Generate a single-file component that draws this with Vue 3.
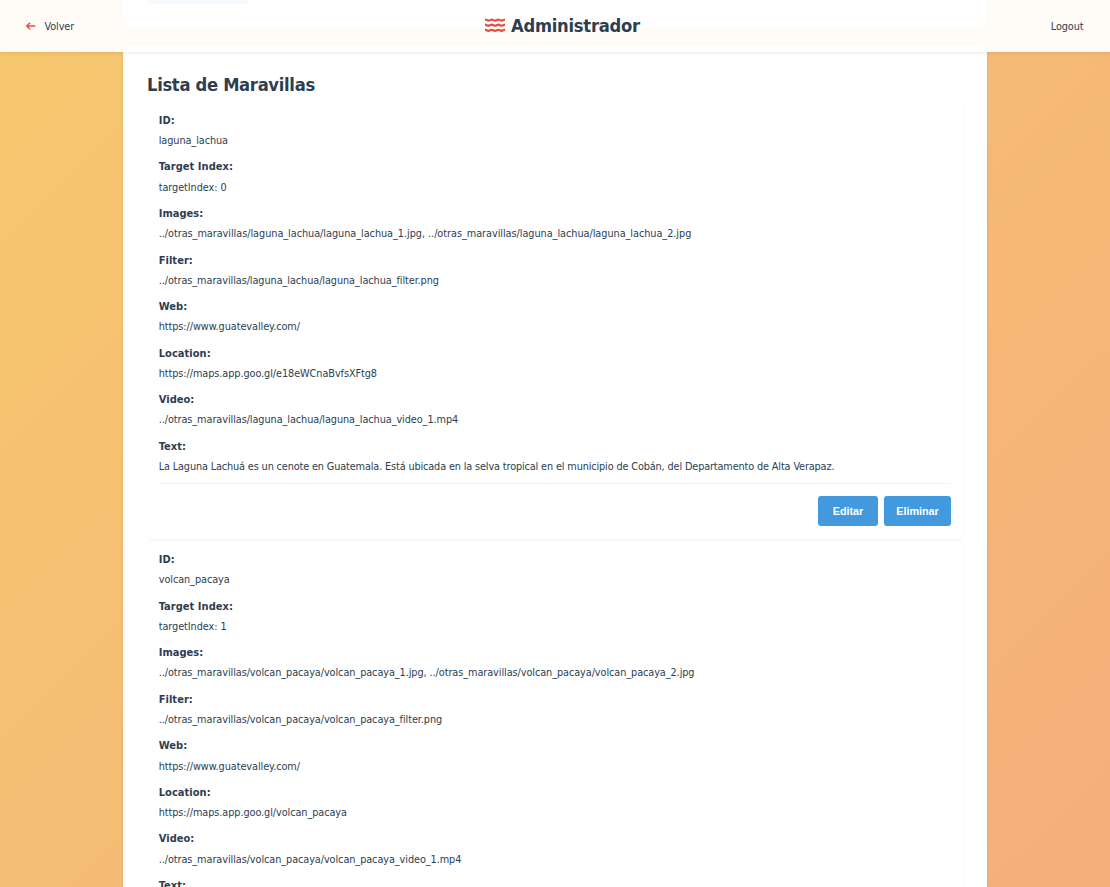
<script setup>
const build = (id, index, location, text) => ({
  id,
  fields: [
    ['ID:', id],
    ['Target Index:', `targetIndex: ${index}`],
    ['Images:', `../otras_maravillas/${id}/${id}_1.jpg, ../otras_maravillas/${id}/${id}_2.jpg`],
    ['Filter:', `../otras_maravillas/${id}/${id}_filter.png`],
    ['Web:', 'https://www.guatevalley.com/'],
    ['Location:', `https://maps.app.goo.gl/${location}`],
    ['Video:', `../otras_maravillas/${id}/${id}_video_1.mp4`],
    ['Text:', text],
  ],
})
const items = [
  build('laguna_lachua', 0, 'e18eWCnaBvfsXFtg8', 'La Laguna Lachuá es un cenote en Guatemala. Está ubicada en la selva tropical en el municipio de Cobán, del Departamento de Alta Verapaz.'),
  build('volcan_pacaya', 1, 'volcan_pacaya', ''),
]
</script>

<template>
  <div class="page">
    <header class="bar">
      <a class="back">
        <svg width="10" height="8" viewBox="0 0 10 8"><path d="M9.3 4H.9M4 .8.8 4 4 7.2" /></svg>
        <span>Volver</span>
      </a>
      <h1 class="brand">
        <svg width="20" height="14" viewBox="0 0 20 14">
          <path v-for="y in [1.6, 6.7, 11.8]" :key="y" :d="`M0 ${y}C1.4 ${y} 2 ${y + 1} 3.4 ${y + 1}S5.3 ${y} 6.7 ${y} 8.6 ${y + 1} 10 ${y + 1} 11.9 ${y} 13.3 ${y} 15.2 ${y + 1} 16.6 ${y + 1} 18.6 ${y} 20 ${y}`" />
        </svg>
        <span>Administrador</span>
      </h1>
      <a class="logout">Logout</a>
    </header>
    <main class="content">
      <section class="panel previous"><div class="strip"></div></section>
      <section class="panel list">
        <h2>Lista de Maravillas</h2>
        <article v-for="item in items" :key="item.id" class="card">
          <div v-for="[label, value] in item.fields" :key="label" class="field">
            <strong>{{ label }}</strong>
            <p v-if="value" :class="{ prose: label === 'Text:', pair: item.id === 'laguna_lachua' && label === 'Images:' }">{{ value }}</p>
          </div>
          <div v-if="item.fields[7][1]" class="actions">
            <button class="edit">Editar</button>
            <button class="remove">Eliminar</button>
          </div>
        </article>
      </section>
    </main>
  </div>
</template>

<style>
body { overflow: hidden; }
</style>
<style scoped>
.page {
  height: 887px;
  overflow: hidden;
  background: linear-gradient(135deg, #f7c86e, #f4af7b);
  color: #2c3e50;
  font-family: Tahoma, "DejaVu Sans Condensed", "DejaVu Sans", sans-serif;
  font-stretch: condensed;
}
.bar {
  position: absolute;
  inset: 0 0 auto;
  z-index: 2;
  height: 52px;
  box-sizing: border-box;
  padding: 0 26.5px 0 26px;
  display: flex;
  justify-content: space-between;
  align-items: center;
  background: rgba(255, 255, 255, .95);
  box-shadow: 0 1px 4px rgba(0, 0, 0, .1);
}
.back { display: flex; align-items: center; gap: 8.5px; font-size: 10.8px; letter-spacing: -.1px; }
.back svg, .brand svg { fill: none; stroke: #e74c3c; stroke-width: 1.5; }
.brand { margin: 0 0 2px; display: flex; align-items: center; gap: 6px; font-size: 18.2px; letter-spacing: -.25px; }
.brand svg { stroke-width: 2.2; }
.logout { font-size: 10.8px; letter-spacing: -.1px; }
.content { width: 864px; margin: 0 auto; }
.panel { background: #fff; box-shadow: 0 1px 3px rgba(0, 0, 0, .1); }
.previous { height: 28px; border-radius: 0 0 6px 6px; padding-left: 24px; box-sizing: border-box; }
.strip { width: 102px; height: 4px; background: #3498db; border-radius: 0 0 3px 3px; }
.list { margin-top: 18px; padding: 26px 24px; border-radius: 6px 6px 0 0; }
h2 { margin: 0 0 2.6px; font-size: 18.2px; line-height: 25px; letter-spacing: -.3px; }
.card { height: 439.2px; box-sizing: border-box; padding: 11.3px 12px 12px; border-radius: 6px; box-shadow: 0 1px 3px rgba(0, 0, 0, .055); }
.field { height: 46.56px; margin-left: -.3px; font-size: 10.8px; line-height: 20.3px; white-space: nowrap; }
.field strong { display: block; font-size: 11px; letter-spacing: .04px; }
.field p { margin: 0; letter-spacing: -.07px; }
.field .pair { letter-spacing: -.04px; }
.field .prose { letter-spacing: -.13px; }
.actions { display: flex; justify-content: flex-end; gap: 6px; border-top: 1px solid #f1f1f1; padding-top: 12px; }
button { height: 30px; padding: 0; border: 0; border-radius: 3px; background: #4299dd; color: #fff; font: bold 10.8px "Liberation Sans", sans-serif; }
.edit { width: 60px; }
.remove { width: 67px; }
</style>
